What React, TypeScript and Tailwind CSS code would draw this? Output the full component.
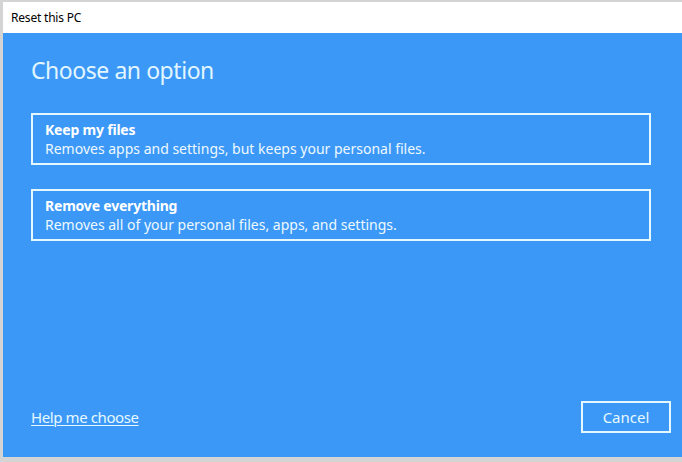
import React from 'react';

const FONT = { fontFamily: '"Noto Sans", "Open Sans", sans-serif' };

interface OptionDef {
  title: string;
  desc: string;
}

const OPTIONS: OptionDef[] = [
  { title: 'Keep my files', desc: 'Removes apps and settings, but keeps your personal files.' },
  { title: 'Remove everything', desc: 'Removes all of your personal files, apps, and settings.' },
];

export default function App() {
  return (
    <div className="w-[682px] h-[462px] bg-[#d4d4d4] pt-[2px] pl-[3px] pb-[5px] flex flex-col overflow-hidden" style={FONT}>
      {/* Title bar */}
      <div className="h-[31px] bg-white flex items-center pl-[8px] shrink-0">
        <span className="text-[12px] text-black tracking-[-0.2px]">Reset this PC</span>
      </div>

      {/* Body */}
      <div className="flex-1 bg-[#3b98f6] flex flex-col pl-[28px] pr-[11px] pb-[24px]">
        <h1 className="text-[23px] text-[#e2f6ff] font-normal mt-[21px] leading-[32px] tracking-[-0.45px]">
          Choose an option
        </h1>

        <div className="flex flex-col gap-[24px] mt-[27px] w-[620px]">
          {OPTIONS.map((opt) => (
            <button
              key={opt.title}
              className="h-[52px] border-2 border-[#e6f8ff] text-left px-[12px] flex flex-col justify-center"
            >
              <span className="text-[14px] font-bold text-white leading-[19px] tracking-[-0.2px]">{opt.title}</span>
              <span className="text-[14px] text-[#eef9ff] leading-[20px] tracking-[0px]">{opt.desc}</span>
            </button>
          ))}
        </div>

        <div className="flex-1" />

        <div className="flex items-center justify-between">
          <a className="text-[15px] text-[#e6f8ff] underline underline-offset-2 decoration-1 tracking-[-0.4px]">
            Help me choose
          </a>
          <button className="w-[90px] h-[32px] border-2 border-[#e6f8ff] text-[15px] text-[#e6f8ff]">
            Cancel
          </button>
        </div>
      </div>
    </div>
  );
}
